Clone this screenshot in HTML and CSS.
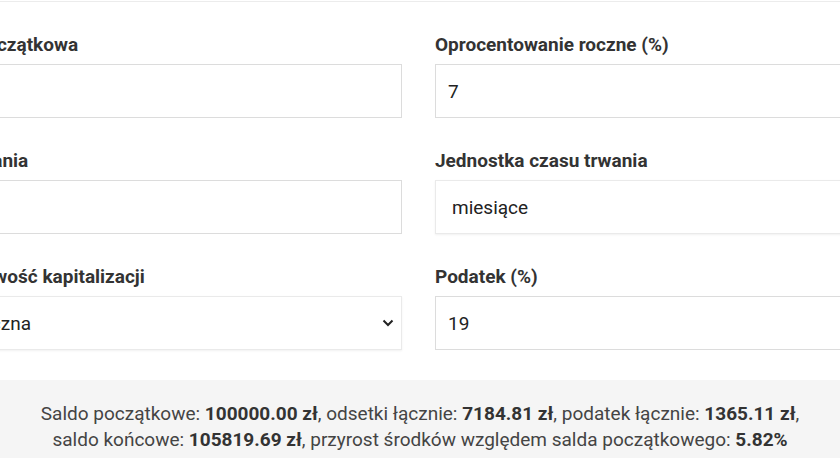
FILE: index.html
```html
<!DOCTYPE html>
<html lang="pl">
<head>
    <meta charset="UTF-8">
    <title>Kalkulator lokaty</title>
    <link rel="stylesheet" href="styles.css">
</head>
<body>
    <div class="calc">
        <div class="form-grid">
            <div class="field">
                <label for="kwota">Kwota początkowa</label>
                <input type="text" id="kwota" value="">
            </div>
            <div class="field">
                <label for="oproc">Oprocentowanie roczne (%)</label>
                <input type="text" id="oproc" value="7">
            </div>
            <div class="field">
                <label for="czas">Czas trwania</label>
                <input type="text" id="czas" value="">
            </div>
            <div class="field">
                <label for="jednostka">Jednostka czasu trwania</label>
                <div class="select-box">
                    <select id="jednostka">
                        <option>miesiące</option>
                        <option>lata</option>
                    </select>
                    <svg class="chevron" width="12" height="8" viewBox="0 0 12 8"><path d="M1.5 1.5l4.5 4.5 4.5-4.5" fill="none" stroke="#222" stroke-width="2"/></svg>
                </div>
            </div>
            <div class="field">
                <label for="kapit">Częstotliwość kapitalizacji</label>
                <div class="select-box">
                    <select id="kapit">
                        <option>miesięczna</option>
                        <option>roczna</option>
                    </select>
                    <svg class="chevron" width="12" height="8" viewBox="0 0 12 8"><path d="M1.5 1.5l4.5 4.5 4.5-4.5" fill="none" stroke="#222" stroke-width="2"/></svg>
                </div>
            </div>
            <div class="field">
                <label for="podatek">Podatek (%)</label>
                <input type="text" id="podatek" value="19">
            </div>
        </div>

        <div class="result">
            Saldo początkowe: <b>100000.00 zł</b>, odsetki łącznie: <b>7184.81 zł</b>, podatek łącznie: <b>1365.11 zł</b>,<br>
            saldo końcowe: <b>105819.69 zł</b>, przyrost środków względem salda początkowego: <b>5.82%</b>
        </div>
    </div>
</body>
</html>
```

FILE: styles.css
```css
/*reset*/
* {
    padding: 0;
    margin: 0;
    box-sizing: border-box;
}

/*default*/
body {
    font: 19px/1.2 Roboto, "Liberation Sans", sans-serif;
    color: #222;
    width: 840px;
    overflow: hidden;
}

/*main*/
.calc {
    margin-top: 1px;
    border-top: 1px solid #ececec;
}
.form-grid {
    display: grid;
    grid-template-columns: 484px 484px;
    column-gap: 33px;
    row-gap: 32px;
    margin-left: -82px;
    padding: 32px 0 30px;
}
.field label {
    display: block;
    font-weight: 700;
    font-size: 19px;
    line-height: 22px;
    color: #333;
    margin-bottom: 8px;
}
.field input,
.field select {
    display: block;
    width: 100%;
    height: 54px;
    font: 19px Roboto, "Liberation Sans", sans-serif;
    color: #222;
    background: #fff;
    border: 1px solid #dcdcdc;
    border-radius: 0;
    outline: none;
    padding: 0 12px;
}
.select-box {
    position: relative;
}
.field select {
    appearance: none;
    -webkit-appearance: none;
    border-color: #eaeaea;
    box-shadow: 0 1px 2px rgba(0,0,0,0.06);
    padding: 0 16px;
}
.select-box .chevron {
    position: absolute;
    right: 8px;
    top: 23px;
    pointer-events: none;
}
.result {
    background-color: #f5f5f5;
    text-align: center;
    color: #444;
    font-size: 19px;
    line-height: 26px;
    padding: 21px 10px 30px;
}
.result b {
    color: #333;
    font-weight: 700;
}
```
